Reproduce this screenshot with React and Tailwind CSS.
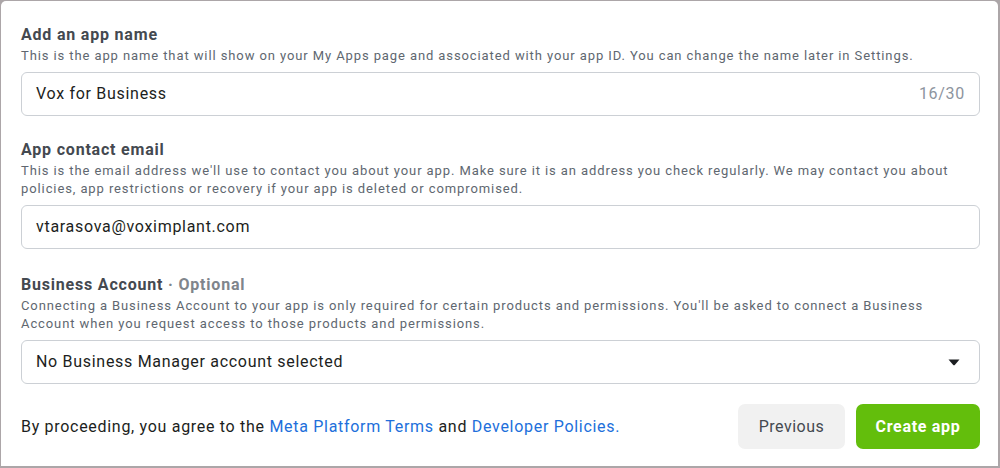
export default function App() {
  return (
    <div
      className="h-[468px] w-[1000px] bg-[#aca6a8] pb-[2px] pl-px pr-[2px] pt-px"
      style={{ fontFamily: "Roboto, 'Liberation Sans', sans-serif" }}
    >
      <div className="h-full w-full rounded-t-[5px] bg-white pl-[20px] pt-[24px]">
        <div className="w-[959px]">
          <Field
            title="Add an app name"
            desc="This is the app name that will show on your My Apps page and associated with your app ID. You can change the name later in Settings."
          >
            <div className="flex h-[44px] items-center justify-between rounded-[6px] border border-[#ccd0d5] pl-[14px] pr-[14px] text-[16px] tracking-[0.7px]">
              <span className="text-[#1c1e21]">Vox for Business</span>
              <span className="text-[#8d949e]">16/30</span>
            </div>
          </Field>

          <div className="mt-[24px]">
            <Field
              title="App contact email"
              desc="This is the email address we'll use to contact you about your app. Make sure it is an address you check regularly. We may contact you about policies, app restrictions or recovery if your app is deleted or compromised."
            >
              <div className="flex h-[44px] items-center rounded-[6px] border border-[#ccd0d5] pl-[14px] text-[16px] tracking-[0.7px] text-[#1c1e21]">
                vtarasova@voximplant.com
              </div>
            </Field>
          </div>

          <div className="mt-[26px]">
            <Field
              title={
                <>
                  Business Account <span className="text-[#80858c]">· Optional</span>
                </>
              }
              desc="Connecting a Business Account to your app is only required for certain products and permissions. You'll be asked to connect a Business Account when you request access to those products and permissions."
            >
              <div className="flex h-[44px] items-center justify-between rounded-[6px] border border-[#ccd0d5] pl-[14px] pr-[19px] text-[16px] tracking-[0.7px] text-[#1c1e21]">
                <span>No Business Manager account selected</span>
                <svg width="12" height="7" viewBox="0 0 12 7" aria-hidden="true">
                  <path d="M0.5 0.5h11L7 5.8Q6 6.8 5 5.8Z" fill="#1c1e21" />
                </svg>
              </div>
            </Field>
          </div>

          <div className="mt-[20px] flex items-center justify-between">
            <p className="text-[16px] leading-5 tracking-[0.7px] text-[#1c1e21]">
              By proceeding, you agree to the{" "}
              <a className="text-[#216fdb]">Meta Platform Terms</a> and{" "}
              <a className="text-[#216fdb]">Developer Policies.</a>
            </p>
            <div className="flex gap-[11px]">
              <button className="h-[45px] w-[107px] rounded-[7px] bg-[#f1f1f1] text-[16px] tracking-[0.5px] text-[#444950]">
                Previous
              </button>
              <button className="h-[45px] w-[124px] rounded-[7px] bg-[#63be0c] text-[16px] font-bold tracking-[0.7px] text-white">
                Create app
              </button>
            </div>
          </div>
        </div>
      </div>
    </div>
  );
}

function Field({ title, desc, children }) {
  return (
    <div>
      <h2 className="text-[16px] font-bold leading-5 tracking-[0.8px] text-[#444950]">{title}</h2>
      <p className="mt-[2px] text-[13px] leading-[18px] tracking-[0.9px] text-[#606770]">{desc}</p>
      <div className="mt-[7px]">{children}</div>
    </div>
  );
}
